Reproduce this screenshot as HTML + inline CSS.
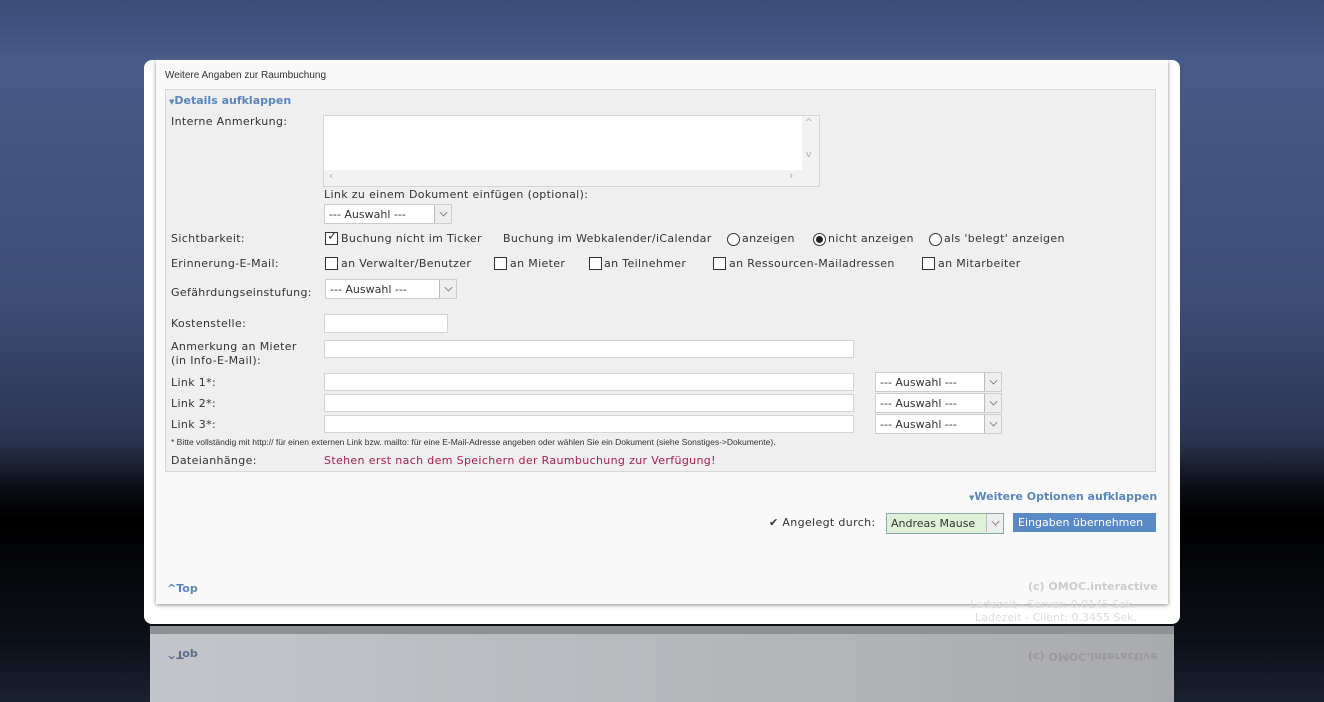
<!DOCTYPE html>
<html><head><meta charset="utf-8"><style>
*{margin:0;padding:0;box-sizing:border-box}
body{width:1324px;height:702px;overflow:hidden;position:relative;font-family:"DejaVu Sans","Liberation Sans",sans-serif;font-size:11px;color:#333;letter-spacing:0.35px;
background:linear-gradient(#3a4c78 0px,#465b88 60px,#3c4e76 300px,#2a3550 440px,#0a0c12 490px,#000 520px,#0c1018 640px,#1a2130 702px)}
.a{position:absolute;white-space:nowrap}
.card{position:absolute;left:144px;top:60px;width:1036px;height:564px;background:#fff;border-radius:8px}
.page{position:absolute;left:156px;top:60px;width:1012px;height:544px;background:#f9f9f9;box-shadow:0 1px 4px #888}
.fs{position:absolute;left:165px;top:89px;width:991px;height:383px;background:#efefef;border:1px solid #d8d8d8}
.inp{position:absolute;background:#fff;border:1px solid #d4d4d4}
.sel{position:absolute;background:#fff;border:1px solid #ccc;height:20px;font-size:11px;padding:3px 0 0 4px;letter-spacing:0}
.sel::after{content:"";position:absolute;right:0;top:0;width:16px;height:18px;border-left:1px solid #bbb;background:#eee}
.arr{position:absolute;right:4px;top:4px;width:7px;height:7px;border-right:1px solid #777;border-bottom:1px solid #777;transform:rotate(45deg) scale(.8);z-index:2}
.cb{position:absolute;width:13px;height:13px;border:1px solid #333;background:#fff}
.rd{position:absolute;width:13px;height:13px;border:1px solid #333;border-radius:50%;background:#fff}
.link{color:#5a86b8;font-weight:bold;letter-spacing:0}
.refl{position:absolute;left:150px;top:626px;width:1024px;height:76px;background:linear-gradient(90deg,#c2c5ca,#b4b6ba 60%,#a8aaae);}
</style></head><body>
<div class="card"></div>
<div class="page"></div>
<div class="a" style="left:165px;top:70px;font-family:'Liberation Sans',sans-serif;font-size:10px;color:#333;letter-spacing:0">Weitere Angaben zur Raumbuchung</div>
<div class="fs"></div>
<div class="a link" style="left:169px;top:94px"><span style="font-size:7px">▼</span>Details aufklappen</div>
<div class="a" style="left:171px;top:115px">Interne Anmerkung:</div>
<div class="inp" style="left:323px;top:115px;width:497px;height:72px;background:#f2f2f2"></div>
<div class="inp" style="left:324px;top:116px;width:478px;height:54px;border:none"></div>
<div class="a" style="left:805px;top:118px;color:#aaa;font-size:9px">^</div>
<div class="a" style="left:806px;top:150px;color:#aaa;font-size:9px">v</div>
<div class="a" style="left:329px;top:169px;color:#aaa">‹</div>
<div class="a" style="left:789px;top:169px;color:#aaa">›</div>
<div class="a" style="left:324px;top:188px">Link zu einem Dokument einfügen (optional):</div>
<div class="sel" style="left:324px;top:204px;width:128px">--- Auswahl ---<i class="arr"></i></div>
<div class="a" style="left:171px;top:232px">Sichtbarkeit:</div>
<div class="cb" style="left:325px;top:232px"></div>
<div class="a" style="left:327px;top:229px;font-size:13px">✓</div>
<div class="a" style="left:341px;top:232px">Buchung nicht im Ticker</div>
<div class="a" style="left:503px;top:232px">Buchung im Webkalender/iCalendar</div>
<div class="rd" style="left:727px;top:233px"></div><div class="a" style="left:742px;top:232px">anzeigen</div>
<div class="rd" style="left:813px;top:233px"></div><div class="a" style="left:816px;top:236px;width:7px;height:7px;border-radius:50%;background:#222"></div><div class="a" style="left:828px;top:232px">nicht anzeigen</div>
<div class="rd" style="left:929px;top:233px"></div><div class="a" style="left:944px;top:232px">als 'belegt' anzeigen</div>
<div class="a" style="left:171px;top:257px">Erinnerung-E-Mail:</div>
<div class="cb" style="left:325px;top:257px"></div><div class="a" style="left:341px;top:257px">an Verwalter/Benutzer</div>
<div class="cb" style="left:494px;top:257px"></div><div class="a" style="left:510px;top:257px">an Mieter</div>
<div class="cb" style="left:589px;top:257px"></div><div class="a" style="left:604px;top:257px">an Teilnehmer</div>
<div class="cb" style="left:713px;top:257px"></div><div class="a" style="left:729px;top:257px">an Ressourcen-Mailadressen</div>
<div class="cb" style="left:922px;top:257px"></div><div class="a" style="left:938px;top:257px">an Mitarbeiter</div>
<div class="a" style="left:171px;top:286px">Gefährdungseinstufung:</div>
<div class="sel" style="left:325px;top:279px;width:132px">--- Auswahl ---<i class="arr"></i></div>
<div class="a" style="left:171px;top:317px">Kostenstelle:</div>
<div class="inp" style="left:324px;top:314px;width:124px;height:19px"></div>
<div class="a" style="left:171px;top:340px;line-height:14px">Anmerkung an Mieter<br>(in Info-E-Mail):</div>
<div class="inp" style="left:324px;top:340px;width:530px;height:18px"></div>
<div class="a" style="left:171px;top:376px">Link 1*:</div>
<div class="inp" style="left:324px;top:373px;width:530px;height:18px"></div>
<div class="sel" style="left:875px;top:372px;width:127px">--- Auswahl ---<i class="arr"></i></div>
<div class="a" style="left:171px;top:397px">Link 2*:</div>
<div class="inp" style="left:324px;top:394px;width:530px;height:18px"></div>
<div class="sel" style="left:875px;top:393px;width:127px">--- Auswahl ---<i class="arr"></i></div>
<div class="a" style="left:171px;top:418px">Link 3*:</div>
<div class="inp" style="left:324px;top:415px;width:530px;height:18px"></div>
<div class="sel" style="left:875px;top:414px;width:127px">--- Auswahl ---<i class="arr"></i></div>
<div class="a" style="left:171px;top:437px;font-family:'Liberation Sans',sans-serif;font-size:8.5px;letter-spacing:0">* Bitte vollständig mit http:// für einen externen Link bzw. mailto: für eine E-Mail-Adresse angeben oder wählen Sie ein Dokument (siehe Sonstiges-&gt;Dokumente).</div>
<div class="a" style="left:171px;top:454px">Dateianhänge:</div>
<div class="a" style="left:324px;top:454px;color:#a8204a">Stehen erst nach dem Speichern der Raumbuchung zur Verfügung!</div>
<div class="a link" style="left:969px;top:490px"><span style="font-size:7px">▼</span>Weitere Optionen aufklappen</div>
<div class="a" style="left:769px;top:516px">✔ Angelegt durch:</div>
<div class="sel" style="left:886px;top:513px;width:118px;height:21px;background:#dff2d8;border-color:#8aa">Andreas Mause<i class="arr"></i></div>
<div class="a" style="left:1013px;top:513px;width:143px;height:19px;background:#5a8ac6;color:#fff;padding:3px 0 0 5px;letter-spacing:0">Eingaben übernehmen</div>
<div class="a link" style="left:167px;top:582px">^Top</div>
<div class="a" style="left:1028px;top:580px;color:#ccc;font-weight:bold;letter-spacing:0">(c) OMOC.interactive</div>
<div class="a" style="left:970px;top:598px;color:#ddd;letter-spacing:0">Ladezeit - Server: 0.0145 Sek.</div>
<div class="a" style="left:975px;top:611px;color:#ddd;letter-spacing:0">Ladezeit - Client: 0.3455 Sek.</div>
<div class="refl"></div>
<div class="a" style="left:150px;top:626px;width:1024px;height:8px;background:#8e9094"></div>
<div class="a link" style="left:167px;top:648px;color:#5a6e8a;transform:scaleY(-1)">^Top</div>
<div class="a" style="left:1028px;top:650px;color:#999;font-weight:bold;transform:scaleY(-1);letter-spacing:0">(c) OMOC.interactive</div>
</body></html>
